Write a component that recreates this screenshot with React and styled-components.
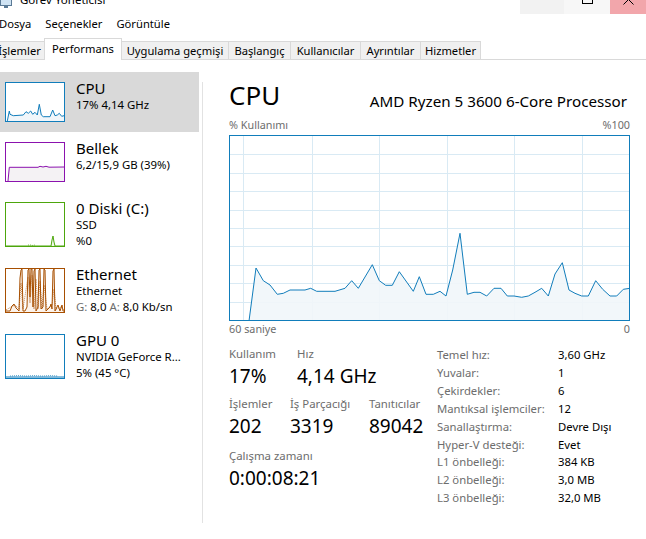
import React from "react";
import styled, { createGlobalStyle } from "styled-components";

const GlobalStyle = createGlobalStyle`
  html, body {
    margin: 0;
    padding: 0;
    background: #ffffff;
  }
  body {
    font-family: "Noto Sans", "Open Sans", sans-serif;
    color: #000000;
  }
`;

const Window = styled.div`
  width: 646px;
  height: 539px;
  overflow: hidden;
  display: flex;
  flex-direction: column;
  background: #ffffff;
`;

/* title bar (cut at the top of the shot) */
const TitleBar = styled.div`
  height: 14px;
  flex-shrink: 0;
  display: flex;
  justify-content: space-between;
  overflow: hidden;
`;

const TitleLabel = styled.div`
  display: flex;
  align-items: flex-end;
  gap: 8px;
  margin-top: -8px;
  font-size: 11.5px;
  line-height: 16px;
  height: 16px;
`;

const WinButtons = styled.div`
  display: flex;
`;

const WinButton = styled.div`
  width: ${(p) => p.$w}px;
  height: 14px;
  background: ${(p) => p.$bg};
  display: flex;
  justify-content: center;
  align-items: flex-end;
`;

/* menu */
const MenuBar = styled.div`
  height: 24px;
  flex-shrink: 0;
  display: flex;
  gap: 14px;
  padding-top: 2px;
  box-sizing: border-box;
  margin-left: -1px;
  font-size: 11.2px;
  line-height: 16px;
`;

/* tabs */
const TabBar = styled.div`
  height: 22px;
  flex-shrink: 0;
  box-sizing: border-box;
  display: flex;
  align-items: flex-end;
  border-bottom: 1px solid #d9d9d9;
  margin-left: -6px;
`;

const Tab = styled.div`
  width: ${(p) => p.$w}px;
  box-sizing: border-box;
  height: ${(p) => (p.$active ? 22 : 18)}px;
  margin-bottom: ${(p) => (p.$active ? -1 : 0)}px;
  background: ${(p) => (p.$active ? "#ffffff" : "#f0f0f0")};
  border: 1px solid #d9d9d9;
  border-bottom: 0;
  margin-left: ${(p) => (p.$first ? 0 : -1)}px;
  position: relative;
  z-index: ${(p) => (p.$active ? 1 : 0)};
  display: flex;
  align-items: ${(p) => (p.$active ? "flex-start" : "center")};
  justify-content: center;
  padding-top: ${(p) => (p.$active ? 2 : 0)}px;
  font-size: 11.2px;
  line-height: 16px;
  white-space: nowrap;
`;

/* body */
const Main = styled.div`
  flex: 1;
  display: flex;
  min-height: 0;
`;

const Sidebar = styled.div`
  width: 199px;
  flex-shrink: 0;
  padding-top: 12px;
`;

const Divider = styled.div`
  width: 1px;
  background: #e2e2e2;
  margin: 22px 0 16px 3px;
`;

const Item = styled.div`
  height: ${(p) => (p.$tall ? 66 : 60)}px;
  box-sizing: border-box;
  display: flex;
  align-items: flex-start;
  padding: 10px 0 0 5px;
  background: ${(p) => (p.$selected ? "#d9d9d9" : "transparent")};
`;

const Thumb = styled.div`
  width: 60px;
  height: ${(p) => (p.$tall ? 45 : 40)}px;
  box-sizing: border-box;
  border: 1px solid ${(p) => p.$color};
  flex-shrink: 0;
  background: #ffffff;
  svg {
    display: block;
  }
`;

const ItemText = styled.div`
  margin: -3px 0 0 11px;
  white-space: nowrap;
`;

const ItemTitle = styled.div`
  font-size: 15px;
  line-height: 18px;
`;

const ItemSub = styled.div`
  font-size: 11.4px;
  line-height: 16px;
`;

const Muted = styled.span`
  color: #6d6d6d;
`;

const Content = styled.div`
  flex: 1;
  padding: 17px 16px 0 26px;
  display: flex;
  flex-direction: column;
`;

const Header = styled.div`
  display: flex;
  justify-content: space-between;
  align-items: baseline;
`;

const BigTitle = styled.div`
  font-size: 26px;
  line-height: 36px;
`;

const ProcName = styled.div`
  font-size: 15.2px;
  line-height: 22px;
  margin-right: 3px;
  position: relative;
  top: 2px;
`;

const AxisRow = styled.div`
  display: flex;
  justify-content: space-between;
  font-size: 10.8px;
  line-height: 16px;
  color: #6d6d6d;
  margin-top: ${(p) => p.$mt || 0}px;
`;

const Graph = styled.div`
  width: 401px;
  height: 186px;
  box-sizing: border-box;
  border: 1px solid #117dbb;
  margin-top: 2px;
  svg {
    display: block;
  }
`;

const Stats = styled.div`
  display: flex;
  margin-top: 9px;
`;

const StatsLeft = styled.div`
  width: 208px;
  display: flex;
  flex-direction: column;
  gap: 6px;
`;

const StatRow = styled.div`
  display: flex;
  margin-top: ${(p) => p.$mt || 0}px;
`;

const Stat = styled.div`
  width: ${(p) => (p.$w ? `${p.$w}px` : "auto")};
`;

const StatLabel = styled.div`
  font-size: 11.4px;
  line-height: 16px;
  color: #6d6d6d;
  white-space: nowrap;
`;

const StatValue = styled.div`
  font-size: 19px;
  line-height: 28px;
  white-space: nowrap;
`;

const Specs = styled.div`
  display: grid;
  grid-template-columns: 121px auto;
  font-size: 11.3px;
  line-height: 17.9px;
`;

const SpecLabel = styled.div`
  color: #6d6d6d;
  white-space: nowrap;
`;

const SpecValue = styled.div`
  white-space: nowrap;
`;

const cpuPoints = [
  [20, 186], [27, 133], [34.3, 145.7], [41, 150], [48.3, 159.3], [54.3, 158.3],
  [61, 155], [76, 155], [81.7, 153.3], [87.7, 156.3], [106, 156.3], [116, 153.3],
  [122.7, 145.7], [129.3, 153.3], [143.3, 129.7], [150.3, 145.7], [156.7, 150.3],
  [163.3, 150.3], [170.3, 136.7], [184.3, 156.3], [190.3, 141.7], [197, 159.3],
  [204.3, 159.3], [211, 156.3], [217, 161], [223.7, 135], [231, 98.3], [238.3, 159.3],
  [245, 157.3], [251, 157.3], [257.7, 161], [265, 153.3], [272, 153.3], [278.3, 161],
  [285, 161], [292.7, 162.3], [299.3, 161], [306, 157.3], [312.7, 153.3], [319.3, 161],
  [326, 139], [333.3, 127.7], [340, 155], [346, 158.3], [352.7, 161], [359.3, 161],
  [366.7, 145.7], [373.7, 154.3], [381, 161], [387.7, 161], [394.3, 154.3], [401, 153.3],
];

const toStr = (pts) => pts.map(([x, y]) => `${x},${y}`).join(" ");

const CpuGraph = () => {
  const vLines = [14, 83, 150, 218, 285, 353];
  const hLines = [1, 2, 3, 4, 5, 6, 7, 8, 9].map((i) => 1 + i * 18.4);
  const line = toStr(cpuPoints);
  const fill = `${line} 401,186 20,186`;
  return (
    <svg width="399" height="184" viewBox="1 1 399 184">
      {vLines.map((x) => (
        <line key={`v${x}`} x1={x + 0.5} y1="0" x2={x + 0.5} y2="186" stroke="#d9eaf4" strokeWidth="1" />
      ))}
      {hLines.map((y) => (
        <line key={`h${y}`} x1="0" y1={Math.round(y) + 0.5} x2="402" y2={Math.round(y) + 0.5} stroke="#d9eaf4" strokeWidth="1" />
      ))}
      <polygon points={fill} fill="#f1f6fa" fillOpacity="0.9" />
      <polyline points={line} fill="none" stroke="#117dbb" strokeWidth="1" />
    </svg>
  );
};

const ThumbGraph = ({ h, color, fill, points, dashed }) => {
  const ih = h - 2;
  const line = toStr(points);
  return (
    <svg width="58" height={ih} viewBox={`0 0 58 ${ih}`} preserveAspectRatio="none">
      <polygon points={`${line} 58,${ih} 0,${ih}`} fill={fill} />
      <polyline points={line} fill="none" stroke={color} strokeWidth="1" />
      {dashed && (
        <polyline points={toStr(dashed)} fill="none" stroke={color} strokeWidth="1" strokeDasharray="1 1" opacity="0.7" />
      )}
    </svg>
  );
};

const cpuThumb = [
  [1.3, 38], [3.3, 28], [4, 31.3], [7.3, 32.7], [17.3, 32], [20, 28.7], [22.3, 30.3],
  [24.7, 28], [26.7, 31.3], [29, 29.3], [31.3, 32], [33.3, 21.3], [35.3, 32], [37.3, 33.7],
  [44, 33.7], [46.7, 27], [49, 32.7], [51.3, 32], [53.3, 30.3], [55.7, 33.3], [58, 32.7],
];

const memThumb = [
  [2, 38], [3.3, 24.3], [32, 24.3], [34, 23.3], [37, 24], [40, 23.3], [43, 24.2], [58, 24],
];

const diskThumb = [
  [0, 43], [45, 43], [46, 37], [47, 33], [48, 39], [49, 43], [58, 43],
];
const diskDots = [
  [22, 42], [25, 42], [26, 42.5], [29, 42],
];

const ethThumb = [
  [0, 42], [4, 42], [6, 37], [8, 35], [10, 39], [12, 41], [13, 42], [14, 9], [15, 1], [16, 0],
  [17, 42], [19, 42], [21, 38], [22, 1], [23, 0], [24, 28], [25, 0], [26, 0], [27, 38], [28, 2],
  [29, 0], [30, 42], [32, 38], [33, 1], [34, 0], [35, 40], [37, 38], [38, 0], [39, 1], [40, 42],
  [42, 40], [44, 38], [45, 35], [46, 40], [47, 2], [48, 0], [49, 42], [51, 38], [52, 36],
  [54, 42], [56, 36], [57, 42], [58, 42],
];
const ethSend = [
  [0, 41], [5, 38], [9, 36], [13, 40], [15, 14], [17, 40], [22, 8], [24, 34], [26, 6],
  [28, 40], [30, 10], [32, 40], [34, 12], [36, 40], [38, 16], [41, 40], [46, 36], [48, 20],
  [50, 40], [55, 38], [58, 41],
];

const gpuThumb = [
  [0, 42], [58, 42],
];
const gpuDots = [
  [4, 41], [12, 40.5], [20, 41], [28, 40.5], [36, 41], [44, 40.5], [52, 41],
];

const items = [
  {
    title: "CPU",
    lines: ["17% 4,14 GHz"],
    color: "#117dbb",
    fill: "#f1f6fa",
    points: cpuThumb,
    selected: true,
  },
  {
    title: "Bellek",
    lines: ["6,2/15,9 GB (39%)"],
    color: "#8b12ae",
    fill: "#f4f2f4",
    points: memThumb,
  },
  {
    title: "0 Diski (C:)",
    lines: ["SSD", "%0"],
    color: "#4da60c",
    fill: "#eff7e9",
    points: diskThumb,
    dashed: diskDots,
    tall: true,
  },
  {
    title: "Ethernet",
    lines: [
      "Ethernet",
      <>
        <Muted>G:</Muted> 8,0 <Muted>A:</Muted> 8,0 Kb/sn
      </>,
    ],
    color: "#a74f01",
    fill: "#fcf3eb",
    points: ethThumb,
    dashed: ethSend,
    tall: true,
  },
  {
    title: "GPU 0",
    lines: ["NVIDIA GeForce R...", "5%  (45 °C)"],
    color: "#117dbb",
    fill: "#f1f6fa",
    points: gpuThumb,
    dashed: gpuDots,
    tall: true,
  },
];

const tabs = [
  { label: "İşlemler", w: 51 },
  { label: "Performans", w: 78, active: true },
  { label: "Uygulama geçmişi", w: 108 },
  { label: "Başlangıç", w: 63 },
  { label: "Kullanıcılar", w: 71 },
  { label: "Ayrıntılar", w: 61 },
  { label: "Hizmetler", w: 61 },
];

const specs = [
  ["Temel hız:", "3,60 GHz"],
  ["Yuvalar:", "1"],
  ["Çekirdekler:", "6"],
  ["Mantıksal işlemciler:", "12"],
  ["Sanallaştırma:", "Devre Dışı"],
  ["Hyper-V desteği:", "Evet"],
  ["L1 önbelleği:", "384 KB"],
  ["L2 önbelleği:", "3,0 MB"],
  ["L3 önbelleği:", "32,0 MB"],
];

const AppIcon = () => (
  <svg width="12" height="10" viewBox="0 0 12 10">
    <rect x="0.5" y="0.5" width="11" height="7" fill="#cfe3f3" stroke="#5a7a96" />
    <rect x="4" y="8" width="4" height="2" fill="#5a7a96" />
  </svg>
);

export default function App() {
  return (
    <Window>
      <GlobalStyle />
      <TitleBar>
        <TitleLabel>
          <AppIcon />
          <span>Görev Yöneticisi</span>
        </TitleLabel>
        <WinButtons>
          <WinButton $w={44} $bg="#f2f2f2" />
          <WinButton $w={46} $bg="#f7f7f7">
            <svg width="11" height="14" viewBox="0 0 11 14" style={{ marginBottom: 10 }}>
              <rect x="0.5" y="4.5" width="10" height="9" fill="none" stroke="#000" strokeWidth="1" />
            </svg>
          </WinButton>
          <WinButton $w={36} $bg="#f2a6ab">
            <svg width="11" height="14" viewBox="0 0 11 14" style={{ marginBottom: 9 }}>
              <path d="M0.5 3.5 L10.5 13.5 M10.5 3.5 L0.5 13.5" stroke="#000" strokeWidth="1" />
            </svg>
          </WinButton>
        </WinButtons>
      </TitleBar>

      <MenuBar>
        <span>Dosya</span>
        <span>Seçenekler</span>
        <span>Görüntüle</span>
      </MenuBar>

      <TabBar>
        {tabs.map((t, i) => (
          <Tab key={t.label} $w={t.w} $active={t.active} $first={i === 0}>
            {t.label}
          </Tab>
        ))}
      </TabBar>

      <Main>
        <Sidebar>
          {items.map((it) => (
            <Item key={it.title} $tall={it.tall} $selected={it.selected}>
              <Thumb $tall={it.tall} $color={it.color}>
                <ThumbGraph
                  h={it.tall ? 45 : 40}
                  color={it.color}
                  fill={it.fill}
                  points={it.points}
                  dashed={it.dashed}
                />
              </Thumb>
              <ItemText>
                <ItemTitle>{it.title}</ItemTitle>
                {it.lines.map((l, i) => (
                  <ItemSub key={i}>{l}</ItemSub>
                ))}
              </ItemText>
            </Item>
          ))}
        </Sidebar>
        <Divider />
        <Content>
          <Header>
            <BigTitle>CPU</BigTitle>
            <ProcName>AMD Ryzen 5 3600 6-Core Processor</ProcName>
          </Header>
          <AxisRow $mt={4}>
            <span>% Kullanımı</span>
            <span>%100</span>
          </AxisRow>
          <Graph>
            <CpuGraph />
          </Graph>
          <AxisRow>
            <span>60 saniye</span>
            <span>0</span>
          </AxisRow>
          <Stats>
            <StatsLeft>
              <StatRow>
                <Stat $w={68}>
                  <StatLabel>Kullanım</StatLabel>
                  <StatValue>17%</StatValue>
                </Stat>
                <Stat>
                  <StatLabel>Hız</StatLabel>
                  <StatValue>4,14 GHz</StatValue>
                </Stat>
              </StatRow>
              <StatRow>
                <Stat $w={61}>
                  <StatLabel>İşlemler</StatLabel>
                  <StatValue>202</StatValue>
                </Stat>
                <Stat $w={79}>
                  <StatLabel>İş Parçacığı</StatLabel>
                  <StatValue>3319</StatValue>
                </Stat>
                <Stat>
                  <StatLabel>Tanıtıcılar</StatLabel>
                  <StatValue>89042</StatValue>
                </Stat>
              </StatRow>
              <StatRow $mt={2}>
                <Stat>
                  <StatLabel>Çalışma zamanı</StatLabel>
                  <StatValue>0:00:08:21</StatValue>
                </Stat>
              </StatRow>
            </StatsLeft>
            <Specs>
              {specs.map(([k, v]) => (
                <React.Fragment key={k}>
                  <SpecLabel>{k}</SpecLabel>
                  <SpecValue>{v}</SpecValue>
                </React.Fragment>
              ))}
            </Specs>
          </Stats>
        </Content>
      </Main>
    </Window>
  );
}
